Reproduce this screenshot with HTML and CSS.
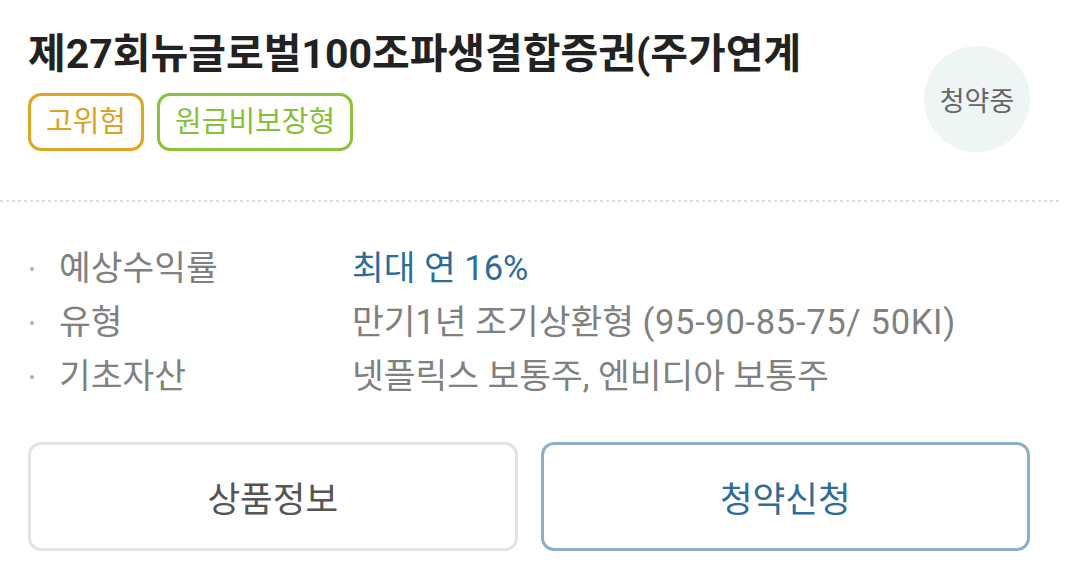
FILE: index.html
```html
<!DOCTYPE html>
<html lang="ko">
<head>
<meta charset="utf-8">
<link rel="stylesheet" href="styles.css">
</head>
<body>
<div class="card">
  <div class="head">
    <div class="head-main">
      <h1 class="title">제27회뉴글로벌100조파생결합증권(주가연계</h1>
      <div class="tags">
        <span class="tag tag-risk">고위험</span>
        <span class="tag tag-loss">원금비보장형</span>
      </div>
    </div>
    <div class="badge">청약중</div>
  </div>
  <div class="divider"></div>
  <ul class="info">
    <li class="row"><span class="bullet"></span><span class="label">예상수익률</span><span class="value value-em">최대 연 16%</span></li>
    <li class="row"><span class="bullet"></span><span class="label">유형</span><span class="value">만기1년 조기상환형 <span class="latin">(95-90-85-75/ 50KI)</span></span></li>
    <li class="row"><span class="bullet"></span><span class="label">기초자산</span><span class="value">넷플릭스 보통주, 엔비디아 보통주</span></li>
  </ul>
  <div class="actions">
    <button class="btn btn-info">상품정보</button>
    <button class="btn btn-apply">청약신청</button>
  </div>
</div>
</body>
</html>
```
FILE: styles.css
```css
* { box-sizing: border-box; }
html, body { margin: 0; padding: 0; background: #fff; }
body {
  font-family: Roboto, "Noto Sans CJK KR", sans-serif;
  width: 1080px;
  height: 588px;
  overflow: hidden;
}
.card {
  width: 1062px;
}
.head {
  display: flex;
  justify-content: space-between;
  align-items: flex-start;
  padding: 31px 32px 48px 28px;
}
.title {
  margin: 0;
  font-size: 41px;
  line-height: 46px;
  font-weight: 700;
  color: #222;
  white-space: nowrap;
}
.tags {
  display: flex;
  gap: 13px;
  margin-top: 16px;
}
.tag {
  display: inline-flex;
  align-items: center;
  height: 58px;
  padding: 0 15px;
  border: 3px solid;
  border-radius: 13px;
  font-size: 29px;
  line-height: 1;
}
.tag-risk { border-color: #dea722; color: #d9a21f; }
.tag-loss { border-color: #8fc23a; color: #87bf3a; }
.badge {
  width: 106px;
  height: 106px;
  margin-top: 15px;
  border-radius: 50%;
  background: #eef6f5;
  display: flex;
  align-items: center;
  justify-content: center;
  font-size: 27px;
  color: #666;
}
.divider {
  height: 2px;
  background: repeating-linear-gradient(to right, #dedede 0 3px, transparent 3px 6px);
}
.info {
  list-style: none;
  margin: 36px 0 0;
  padding: 0 0 0 28px;
}
.row {
  display: flex;
  align-items: center;
  height: 54px;
  font-size: 34.5px;
  color: #808080;
}
.bullet {
  width: 4px;
  height: 4px;
  margin: 8px 25px 0 2px;
  border-radius: 50%;
  background: #b0b0b0;
  flex: none;
}
.label {
  width: 293px;
  flex: none;
}
.value { white-space: nowrap; }
.value-em { color: #2a6c9c; }
.latin { letter-spacing: 0.7px; }
.actions {
  display: flex;
  gap: 23px;
  margin-top: 42px;
  padding: 0 32px 0 28px;
}
.btn {
  flex: 1;
  height: 109px;
  border-radius: 13px;
  background: #fff;
  font-family: Roboto, "Noto Sans CJK KR", sans-serif;
  font-size: 35.5px;
  cursor: pointer;
}
.btn-info { border: 3px solid #e3e3e3; color: #555; }
.btn-apply { border: 3px solid #8db0ca; color: #2e6c9b; }
```
